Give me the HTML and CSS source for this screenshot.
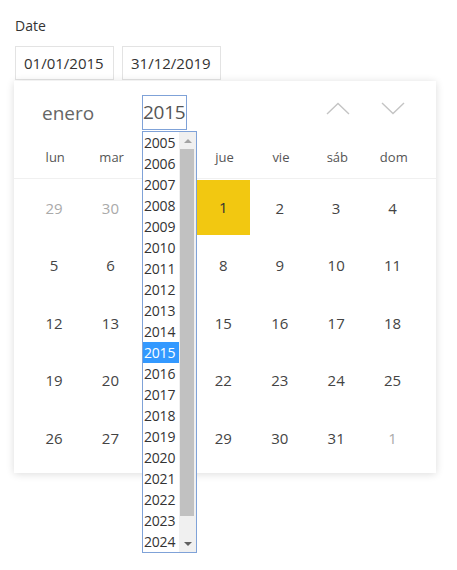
FILE: index.html
```html
<!DOCTYPE html>
<html lang="es">
<head>
  <meta charset="UTF-8">
  <meta name="viewport" content="width=device-width, initial-scale=1.0">
  <title>Date</title>
  <link rel="stylesheet" href="styles.css">
</head>
<body>
  <!-- Date range field -->
  <div class="field">
    <div class="label">Date</div>
    <div class="inputs">
      <input class="date-input" type="text" value="01/01/2015" readonly>
      <input class="date-input" type="text" value="31/12/2019" readonly>
    </div>

    <!-- Calendar popup -->
    <div class="calendar">
      <div class="cal-head">
        <span class="month">enero</span>
        <span class="year-box">2015</span>
        <div class="nav">
          <span class="nav-btn">
            <svg width="24" height="13" viewBox="0 0 24 13"><polyline points="1,12 12,1.5 23,12" fill="none" stroke="#c4c4c4" stroke-width="1.4"/></svg>
          </span>
          <span class="nav-btn">
            <svg width="24" height="13" viewBox="0 0 24 13"><polyline points="1,1 12,11.5 23,1" fill="none" stroke="#c4c4c4" stroke-width="1.4"/></svg>
          </span>
        </div>
      </div>

      <div class="weekdays">
        <span>lun</span><span>mar</span><span>mié</span><span>jue</span><span>vie</span><span>sáb</span><span>dom</span>
      </div>

      <div class="days">
        <div class="day other"><span>29</span></div>
        <div class="day other"><span>30</span></div>
        <div class="day other"><span>31</span></div>
        <div class="day"><span class="selected">1</span></div>
        <div class="day"><span>2</span></div>
        <div class="day"><span>3</span></div>
        <div class="day"><span>4</span></div>
        <div class="day"><span>5</span></div>
        <div class="day"><span>6</span></div>
        <div class="day"><span>7</span></div>
        <div class="day"><span>8</span></div>
        <div class="day"><span>9</span></div>
        <div class="day"><span>10</span></div>
        <div class="day"><span>11</span></div>
        <div class="day"><span>12</span></div>
        <div class="day"><span>13</span></div>
        <div class="day"><span>14</span></div>
        <div class="day"><span>15</span></div>
        <div class="day"><span>16</span></div>
        <div class="day"><span>17</span></div>
        <div class="day"><span>18</span></div>
        <div class="day"><span>19</span></div>
        <div class="day"><span>20</span></div>
        <div class="day"><span>21</span></div>
        <div class="day"><span>22</span></div>
        <div class="day"><span>23</span></div>
        <div class="day"><span>24</span></div>
        <div class="day"><span>25</span></div>
        <div class="day"><span>26</span></div>
        <div class="day"><span>27</span></div>
        <div class="day"><span>28</span></div>
        <div class="day"><span>29</span></div>
        <div class="day"><span>30</span></div>
        <div class="day"><span>31</span></div>
        <div class="day other"><span>1</span></div>
      </div>

      <!-- Open year dropdown -->
      <div class="year-list">
        <div class="years">
          <div class="year">2005</div>
          <div class="year">2006</div>
          <div class="year">2007</div>
          <div class="year">2008</div>
          <div class="year">2009</div>
          <div class="year">2010</div>
          <div class="year">2011</div>
          <div class="year">2012</div>
          <div class="year">2013</div>
          <div class="year">2014</div>
          <div class="year active">2015</div>
          <div class="year">2016</div>
          <div class="year">2017</div>
          <div class="year">2018</div>
          <div class="year">2019</div>
          <div class="year">2020</div>
          <div class="year">2021</div>
          <div class="year">2022</div>
          <div class="year">2023</div>
          <div class="year">2024</div>
        </div>
        <div class="scrollbar">
          <div class="arrow"><span class="tri-up"></span></div>
          <div class="thumb"></div>
          <div class="arrow"><span class="tri-down"></span></div>
        </div>
      </div>
    </div>
  </div>
</body>
</html>
```

FILE: styles.css
```css
html, body {
  min-height: 570px;
}
body {
  margin: 0;
  background-color: #fff;
  color: #333;
  font-family: 'Open Sans', 'Noto Sans', Arial, sans-serif;
}
.field {
  padding: 16px 0 0 14px;
  min-height: 554px;
}
.label {
  font-size: 14px;
  line-height: 20px;
  margin-left: 1px;
  margin-bottom: 10px;
  color: #333;
}
.inputs {
  display: flex;
  gap: 8px;
  margin-left: 1px;
}
.date-input {
  box-sizing: border-box;
  width: 99px;
  height: 34px;
  padding: 0 0 0 8px;
  border: 1px solid #e3e3e3;
  font-family: inherit;
  font-size: 15px;
  color: #333;
  outline: none;
}
/* calendar popup */
.calendar {
  position: relative;
  width: 422px;
  margin-top: 1px;
  background-color: #fff;
  box-shadow: 0 1px 8px rgba(0, 0, 0, 0.14);
}
.cal-head {
  display: flex;
  align-items: center;
  height: 35px;
  padding: 14px 14px 0 28px;
}
.month {
  width: 100px;
  font-size: 19px;
  color: #666;
}
.year-box {
  box-sizing: border-box;
  width: 45px;
  height: 35px;
  border: 1px solid #7fa2d8;
  font-size: 19px;
  line-height: 33px;
  color: #555;
  letter-spacing: -0.3px;
}
.nav {
  display: flex;
  margin-left: auto;
  margin-right: 2px;
}
.nav-btn {
  width: 55px;
  height: 35px;
  display: flex;
  align-items: flex-start;
  justify-content: center;
  padding-top: 7px;
  box-sizing: border-box;
}
.weekdays {
  display: grid;
  grid-template-columns: repeat(7, 1fr);
  padding: 17px 14px 11px 13px;
  border-bottom: 1px solid #f0f0f0;
  font-size: 13px;
  line-height: 20px;
  color: #555;
  text-align: center;
}
.days {
  display: grid;
  grid-template-columns: repeat(7, 1fr);
  grid-auto-rows: 57.5px;
  padding: 1px 14px 5px 13px;
}
.day span {
  display: flex;
  align-items: center;
  justify-content: center;
  width: 54px;
  height: 55px;
  font-size: 15px;
  color: #444;
}
.day.other span {
  color: #aaa;
}
.day .selected {
  height: 53px;
  padding-bottom: 2px;
  background-color: #f2c811;
  color: #333;
}
/* year dropdown, open over the calendar */
.year-list {
  position: absolute;
  left: 128px;
  top: 50px;
  display: flex;
  width: 53px;
  height: 420px;
  border: 1px solid #7fa2d8;
  background-color: #fff;
  z-index: 2;
}
.years {
  flex: 1;
}
.year {
  height: 21px;
  line-height: 21px;
  font-size: 14px;
  color: #333;
  padding-left: 1px;
  letter-spacing: -0.2px;
}
.year.active {
  background-color: #3399ff;
  color: #fff;
}
.scrollbar {
  width: 17px;
  display: flex;
  flex-direction: column;
  background-color: #f0f0f0;
}
.arrow {
  height: 17px;
  display: flex;
  align-items: center;
  justify-content: center;
}
.tri-up {
  width: 0;
  height: 0;
  border-left: 4px solid transparent;
  border-right: 4px solid transparent;
  border-bottom: 4px solid #a3a3a3;
}
.tri-down {
  width: 0;
  height: 0;
  border-left: 4px solid transparent;
  border-right: 4px solid transparent;
  border-top: 4px solid #606060;
}
.thumb {
  flex: 1;
  margin: 0 2px 19px 1px;
  background-color: #c1c1c1;
}
```
